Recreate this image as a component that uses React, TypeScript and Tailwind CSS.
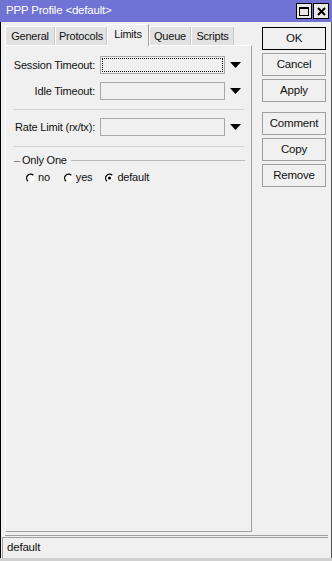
import React from "react";

function Arrow() {
  return (
    <svg width="11" height="6" viewBox="0 0 11 6" className="ml-[5px] shrink-0">
      <polygon points="0,0 11,0 5.5,6" fill="#000" />
    </svg>
  );
}

function Radio({ checked }: { checked?: boolean }) {
  return (
    <svg width="9" height="10" viewBox="0 0 9 10" className="shrink-0">
      <circle cx="4.5" cy="5" r="4" fill="#fff" />
      <path d="M 7.3 2.2 A 4 4 0 1 0 2 8.2" fill="none" stroke="#000" strokeWidth="1.3" />
      {checked && <circle cx="4.5" cy="5" r="1.6" fill="#000" />}
    </svg>
  );
}

function Field({ label, focused }: { label: string; focused?: boolean }) {
  return (
    <div className="flex items-center h-[18px]">
      <div className="w-[90px] text-right pr-[5px] whitespace-nowrap">{label}</div>
      <div className="w-[125px] h-[18px] border border-[#a8a8a8] bg-[#f0f0f0] p-[1px]">
        {focused && <div className="w-full h-full border border-dotted border-black" />}
      </div>
      <Arrow />
    </div>
  );
}

function Btn({ children, primary }: { children: React.ReactNode; primary?: boolean }) {
  return (
    <div
      className={
        "h-[23px] w-[64px] flex items-center justify-center bg-[#f0f0f0] text-[11.5px] " +
        (primary ? "border border-black" : "border border-[#a0a0a0]")
      }
    >
      {children}
    </div>
  );
}

const tabs: [string, number][] = [
  ["General", 50],
  ["Protocols", 52],
  ["Limits", 42],
  ["Queue", 42],
  ["Scripts", 43],
];

export default function App() {
  return (
    <div
      className="w-[332px] h-[561px] bg-[#f0f0f0] flex flex-col text-[11px] tracking-[-0.2px] text-[#111] overflow-hidden"
      style={{ fontFamily: '"Liberation Sans", Arial, sans-serif' }}
    >
      {/* title bar */}
      <div className="h-[22px] shrink-0 bg-[#7073d3] flex items-center pl-[6px] pr-[3px] text-white text-[11.5px]">
        <span className="flex-1">PPP Profile &lt;default&gt;</span>
        <div className="flex gap-[1px]">
          <div className="w-[16px] h-[16px] bg-[#e8e8e8] border border-black flex items-center justify-center">
            <div className="w-[10px] h-[9px] border border-black border-t-2" />
          </div>
          <div className="w-[16px] h-[16px] bg-[#e8e8e8] border border-black flex items-center justify-center">
            <svg width="9" height="9" viewBox="0 0 9 9">
              <path d="M1 1 L8 8 M8 1 L1 8" stroke="#000" strokeWidth="2" />
            </svg>
          </div>
        </div>
      </div>

      <div className="flex-1 flex flex-col border-l border-black border-r border-r-[#555]">
        <div className="flex-1 flex">
          {/* main column */}
          <div className="ml-[4px] w-[247px] flex flex-col">
            <div className="h-[23px] flex items-end shrink-0">
              {tabs.map(([t, w]) => {
                const active = t === "Limits";
                return (
                  <div
                    key={t}
                    style={{ width: w }}
                    className={
                      "flex items-center justify-center border-t border-l border-r " +
                      (active
                        ? "h-[22px] bg-[#f0f0f0] border-white border-r-[#a0a0a0] -mb-[1px] relative z-10 pb-[3px]"
                        : "h-[19px] bg-[#e2e2e2] border-white border-r-[#c8c8c8]")
                    }
                  >
                    {t}
                  </div>
                );
              })}
            </div>
            <div className="flex-1 border-t border-l border-white border-r border-b border-r-[#a0a0a0] border-b-[#a0a0a0] mb-[3px] flex flex-col pt-[10px] pl-[4px] pr-[4px]">
              <div className="flex flex-col gap-[8px]">
                <Field label="Session Timeout:" focused />
                <Field label="Idle Timeout:" />
              </div>
              <div className="h-px bg-[#d4d4d4] mt-[9px] mb-[8px] mx-[3px]" />
              <Field label="Rate Limit (rx/tx):" />
              <div className="h-px bg-[#d4d4d4] mt-[10px] mb-[5px] mx-[3px]" />
              <div className="flex items-center pl-[4px] h-[16px]">
                <span className="text-[#666] mr-[2px]">–</span>
                <span className="mr-[4px]">Only One</span>
                <div className="flex-1 h-px bg-[#b8b8b8] mr-[2px]" />
              </div>
              <div className="flex items-center h-[17px] pl-[16px] mt-[1px]">
                <Radio />
                <span className="ml-[3px] mr-[14px]">no</span>
                <Radio />
                <span className="ml-[3px] mr-[13px]">yes</span>
                <Radio checked />
                <span className="ml-[3px]">default</span>
              </div>
            </div>
          </div>
          {/* buttons */}
          <div className="ml-[10px] pt-[5px] flex flex-col">
            <div className="flex flex-col gap-[3px]">
              <Btn primary>OK</Btn>
              <Btn>Cancel</Btn>
              <Btn>Apply</Btn>
            </div>
            <div className="flex flex-col gap-[3px] mt-[10px]">
              <Btn>Comment</Btn>
              <Btn>Copy</Btn>
              <Btn>Remove</Btn>
            </div>
          </div>
        </div>
        {/* status */}
        <div className="h-px bg-[#a0a0a0] ml-[4px] mr-[3px]" />
        <div className="h-[21px] mt-[1px] ml-[1px] mr-[3px] border-l border-t border-[#a0a0a0] flex items-center pl-[4px] text-[11.5px]">
          default
        </div>
      </div>
      <div className="h-[3px] bg-[#d0d0d0] shrink-0" />
    </div>
  );
}
